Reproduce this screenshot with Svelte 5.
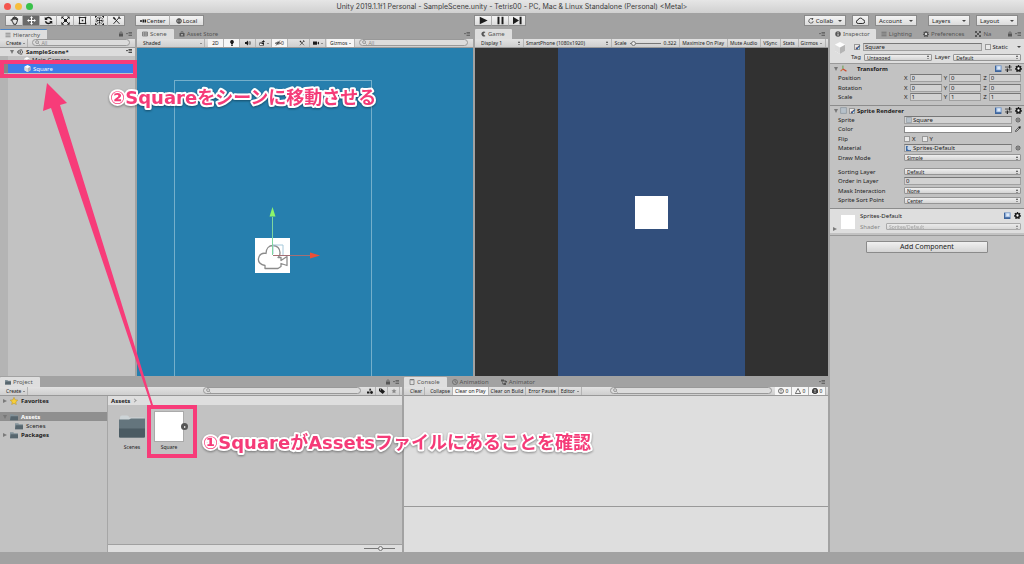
<script>
	const tools = ["hand", "move", "rotate", "scale", "rect", "transform", "custom"];
	let tool = $state("move");
	let clearOnPlay = $state(true);

	const transform = [
		{ name: "Position", v: ["0", "0", "0"] },
		{ name: "Rotation", v: ["0", "0", "0"] },
		{ name: "Scale", v: ["1", "1", "1"] }
	];
	const axes = ["X", "Y", "Z"];
</script>

<!-- all small icons share a 12x12 box -->
{#snippet icon(name)}
	<svg class="icon" viewBox="0 0 12 12" aria-hidden="true">
		{#if name == "hand"}
			<path class="line" d="M3.5 7.5 1 5.5l1-.9 1.6 1.1V2.5l1.1-.3.5 2.6V1.3l1.2-.2.3 3.6.7-3 1.1.2-.2 3.4 1.2-2 .9.5-1.1 4.3L8 11H4.8z" />
		{:else if name == "move"}
			<path d="M6 0 8 2.6H6.7v2.7h2.7V4L12 6 9.4 8V6.7H6.7v2.7H8L6 12 4 9.4h1.3V6.7H2.6V8L0 6l2.6-2v1.3h2.7V2.6H4z" />
		{:else if name == "rotate"}
			<path class="bold" d="M10 5A4.2 4.2 0 0 0 2.5 3.8M2 7a4.2 4.2 0 0 0 7.5 1.2" />
			<path d="M1 1v4.4h4zM11 11V6.6H7z" />
		{:else if name == "scale"}
			<path class="line" d="m2 2 8 8M10 2l-8 8" />
			<path d="M4 4h4v4H4zM.5.5h3.7L.5 4.2zM11.5.5v3.7L7.8.5zM.5 11.5V7.8l3.7 3.7zM11.5 11.5H7.8l3.7-3.7z" />
		{:else if name == "rect"}
			<path class="line" d="M2 2h8v8H2z" />
			<path d="M1 1h2v2H1zM9 1h2v2H9zM1 9h2v2H1zM9 9h2v2H9zM5 5h2v2H5z" />
		{:else if name == "transform"}
			<circle class="dash" cx="6" cy="6" r="4.6" />
			<path d="M6 2 7.5 4h-1v1.5H8v-1L10 6 8 7.5v-1H6.5V8h1L6 10 4.5 8h1V6.5H4v1L2 6l2-1.5v1h1.5V4h-1zM0 0h3L0 3zM12 0v3L9 0zM0 12V9l3 3zM12 12H9l3-3z" />
		{:else if name == "custom"}
			<path class="line" d="m3 3 7 7.5M2 10.5 9.5 2" />
			<path d="M1 2.5 2.5 1 5 3.5 3.500 5zM8 1l1 2 2 1 .8-1.500-1 .3-.8-.9.5-1.200z" />
		{:else if name == "pivot"}
			<path d="M0 4.5h4v3H0zM5 3h3v6H5zM9 3h3v6H9z" />
		{:else if name == "globe"}
			<circle class="line" cx="6" cy="6" r="4.8" />
			<path class="line" d="M1 6h10M6 1v10M2.5 3.3h7M2.5 8.7h7" />
		{:else if name == "play"}
			<path d="M1 1v10l10.5-5z" />
		{:else if name == "pause"}
			<path d="M2 1h2.6v10H2zM7.4 1H10v10H7.4z" />
		{:else if name == "step"}
			<path d="M0 1v10l8-5zM8.8 1h2.6v10H8.8z" />
		{:else if name == "sync"}
			<path class="line" d="M8.5 2A4.5 4.5 0 1 0 10.5 6" /><path d="m7 0 4 1-2.5 3z" />
		{:else if name == "cloud"}
			<path class="line" d="M3 10a2.3 2.3 0 0 1-.3-4.6 3.4 3.4 0 0 1 6.5-.4A2.5 2.5 0 0 1 9 10z" />
		{:else if name == "list"}
			<path class="line" d="M1 2.5h10M1 6h10M1 9.5h10" />
		{:else if name == "hash"}
			<path class="line" d="M1 2h10v8H1zM1 6h10M4.5 2v8M8 2v8" />
		{:else if name == "bag"}
			<path d="M1 4h10v7H1z" /><path class="line" d="M4 5V1.5h4V5" /><path class="white" d="M5 6h2v3H5z" />
		{:else if name == "pac"}
			<path d="M11 2A5 5 0 1 0 11 10L6.5 6z" />
		{:else if name == "info"}
			<circle cx="6" cy="6" r="5.5" /><path class="white" d="M5.2 2.4h1.7V4H5.2zM5.2 5h1.7v4.5H5.2z" />
		{:else if name == "gear"}
			<path d="M5 0h2l.4 1.7 1 .4L10 1.200 11.2 3l-1 1.3.4 1L12 6l-.3 2-1.6.3-.5 1 .7 1.5L8.5 12 7 11H5l-1.5 1-1.8-1.2.7-1.5-.5-1L.3 8 0 6l1.4-.7.4-1L.8 3 2 1.200l1.6.9 1-.4z" />
			<circle class="white" cx="6" cy="6" r="2" />
		{:else if name == "nav"}
			<path class="bold" d="m2 2 8 8M10 2l-8 8" /><path d="M0 0h4v4H0zM8 0h4v4H8zM0 8h4v4H0zM8 8h4v4H8z" />
		{:else if name == "lock"}
			<path d="M2 5h8v6H2z" /><path class="line" d="M4 5V2h4v3" />
		{:else if name == "menu"}
			<path d="M0 4h4L2 7zM5 2h7v1.5H5zM5 5h7v1.5H5zM5 8h7v1.5H5z" />
		{:else if name == "unity"}
			<path class="line" d="M9 1 2.5 3.500 1 6l1.500 2.500L9 11M11 3.500V8.500M6.500 6H1.500M6.500 6 9.500 1.500M6.500 6l3 4.500" />
		{:else if name == "cube"}
			<path fill="#fdfdfd" d="m6 0 5 2.5v6.5L6 12 1 9V2.5z" /><path fill="#b5b5b5" d="M6 5.5 11 2.8V9l-5 3z" /><path fill="#dcdcdc" d="M6 5.5 1 2.8V9l5 3z" />
		{:else if name == "bulb"}
			<path d="M6 0a3.8 3.8 0 0 0-2 7v2h4V7a3.8 3.8 0 0 0-2-7zM4.5 10h3v2h-3z" />
		{:else if name == "sound"}
			<path d="M0 4h2.5L6 1v10L2.5 8H0z" /><path class="line" d="M7.5 3.5q1.5 2.5 0 5M9.5 2q2.5 4 0 8" />
		{:else if name == "fx"}
			<path d="M1 5h9v6H1z" /><path d="m5 3 3-1V0l4 3-4 2z" /><path class="white" d="M2 8l2-2 2 3 1.5-1L9 10H2z" />
		{:else if name == "eye"}
			<path class="line" d="M.5 6.5Q6 1 11.5 6.5 6 10.5.5 6.5zM2 11l8-10" /><circle cx="6" cy="6" r="1.5" />
		{:else if name == "camera"}
			<path d="M0 3h8v6.5H0zM8.5 6 12 3v6.5z" />
		{:else if name == "folder"}
			<path fill="#83929a" d="M0 2h5l1 1.5h6V11H0z" /><path fill="#57666e" d="M1 5h11v6H0z" />
		{:else if name == "star"}
			<path fill="#f7cf3a" stroke="#a98414" stroke-width=".6" d="m6 .5 1.7 3.7 4 .5-3 2.7.8 4L6 9.4l-3.5 2 .8-4-3-2.7 4-.5z" />
		{:else if name == "console"}
			<path class="line" d="M2 .8h8v10.4H2z" /><path d="M3 1h6v1.5H3z" />
		{:else if name == "clock"}
			<circle class="line" cx="6" cy="6" r="5" /><path class="line" d="M6 2.5V6l3 1.5" />
		{:else if name == "animator"}
			<path d="M0 1h6v4H0zM7 4h5v3H7zM5 8h5v4H5z" /><path class="line" d="M3 5v5h3M6 3h3v2" />
		{:else if name == "shapes"}
			<path d="m6 0 3 5H4zM0 7h5v4H0z" /><circle cx="9" cy="9" r="2.8" />
		{:else if name == "tag"}
			<path d="M0 1h5l7 6-4.5 5L0 6z" /><circle class="white" cx="3" cy="3.5" r="1" />
		{:else if name == "fav"}
			<path d="m6 1 1.5 3.3 3.5.4-2.6 2.4.7 3.5L6 8.9l-3.1 1.7.7-3.5L1 4.7l3.5-.4z" />
		{:else if name == "log"}
			<circle class="line" cx="6" cy="6" r="5" /><path d="M5.4 2.5h1.2v4.5H5.4zM5.4 8h1.2v1.3H5.4z" />
		{:else if name == "warn"}
			<path class="line" d="M6 1 11.3 11H.7z" />
		{:else if name == "error"}
			<path fill="#444" d="M3.5 0h5L12 3.5v5L8.5 12h-5L0 8.5v-5z" /><path class="white" d="M5.2 2.5h1.6v4.5H5.2zM5.2 8h1.6v1.5H5.2z" />
		{:else if name == "book"}
			<path fill="#3d649c" d="M0 1h11v11H0z" /><path fill="#9ebbe2" d="M2 1h9v8H2z" /><path fill="#dfeaf7" d="M4 2.5h5v5H4z" />
		{:else if name == "preset"}
			<path class="line" d="M0 3.5h7M5 8.5h7M0 8.5h3" /><path d="M7 0h2v6H7zM3 6h2v6H3zM9 3h3v1H9z" />
		{:else if name == "axes"}
			<path stroke="#5a9c3a" stroke-width="1.5" d="M5 7V1" /><path stroke="#c94b32" stroke-width="2" d="m5 7 6 3.5" /><path stroke="#d06a3a" stroke-width="2" d="M5 7 1 10.5" />
		{:else if name == "sprite"}
			<path fill="#b6c0c9" stroke="#7f8b95" d="M1 1h10v10H1z" />
		{:else if name == "ball"}
			<path fill="#3d69a3" d="M0 2h10v10H0z" /><circle cx="7" cy="6" r="4.5" fill="#c8d8ea" />
		{:else if name == "pick"}
			<circle class="line" cx="6" cy="6" r="4" /><circle cx="6" cy="6" r="1.3" />
		{:else if name == "dropper"}
			<path class="line" d="m1 11 .5-2.5 5-5 2 2-5 5z" /><path d="m6 2 1-1 1 .8L9.8 0 12 2.200 10.200 4l.8 1-1 1z" />
		{/if}
	</svg>
{/snippet}

{#snippet search(label, hint)}
	<label class="search">
		<svg viewBox="0 0 12 12" aria-hidden="true"><circle cx="5" cy="5" r="3.5" /><path d="m8 8 3 3" /></svg>
		<input type="search" aria-label={label} placeholder={hint} />
	</label>
{/snippet}

{#snippet drop(value, label)}
	<span class="drop"><select aria-label={label}><option>{value}</option></select></span>
{/snippet}

{#snippet compIcons()}
	<span class="right comp-icons">{@render icon("book")}{@render icon("preset")}{@render icon("gear")}</span>
{/snippet}

<div class="window">
	<header class="title">
		<span class="lights"><i class="red"></i><i class="yellow"></i><i class="green"></i></span>
		<h1>Unity 2019.1.1f1 Personal - SampleScene.unity - Tetris00 - PC, Mac &amp; Linux Standalone (Personal) &lt;Metal&gt;</h1>
	</header>

	<nav class="toolbar">
		<div class="left-tools">
			<div class="group tools">
				{#each tools as t}
					<button class:active={tool == t} aria-label={t} onclick={() => (tool = t)}>{@render icon(t)}</button>
				{/each}
			</div>
			<div class="group pivots">
				<button>{@render icon("pivot")}Center</button>
				<button>{@render icon("globe")}Local</button>
			</div>
		</div>
		<div class="group tools">
			<button aria-label="Play">{@render icon("play")}</button>
			<button aria-label="Pause">{@render icon("pause")}</button>
			<button aria-label="Step">{@render icon("step")}</button>
		</div>
		<div class="right-tools">
			<button class="pop">{@render icon("sync")}Collab<b class="caret"></b></button>
			<button class="small" aria-label="Services">{@render icon("cloud")}</button>
			<button class="pop">Account<b class="caret"></b></button>
			<button class="pop gap">Layers<b class="caret"></b></button>
			<button class="pop">Layout<b class="caret"></b></button>
		</div>
	</nav>

	<div class="work">
		<div class="docks">
			<div class="upper">
				<section class="panel hierarchy">
					<div class="tabs">
						<button class="tab on focus">{@render icon("list")}Hierarchy</button>
						<span class="right">{@render icon("lock")}{@render icon("menu")}</span>
					</div>
					<div class="bar">
						<button>Create<b class="caret"></b></button>
						{@render search("Search hierarchy", "All")}
					</div>
					<ul class="scene-tree">
						<li class="scene-name"><b class="fold open"></b>{@render icon("unity")}<strong>SampleScene*</strong><span class="right">{@render icon("menu")}</span></li>
						<li>{@render icon("cube")}Main Camera</li>
						<li class="selected">{@render icon("cube")}Square</li>
					</ul>
				</section>

				<section class="panel scene">
					<div class="tabs">
						<button class="tab on">{@render icon("hash")}Scene</button>
						<button class="tab">{@render icon("bag")}Asset Store</button>
						<span class="right">{@render icon("menu")}</span>
					</div>
					<div class="bar">
						<button class="shaded">Shaded<b class="caret right"></b></button>
						<div class="toggles">
							<button class="lit">2D</button>
							<button class="lit" aria-label="Lighting">{@render icon("bulb")}</button>
							<button aria-label="Audio">{@render icon("sound")}</button>
							<button aria-label="Effects">{@render icon("fx")}<b class="caret"></b></button>
							<button class="lit">{@render icon("eye")}0</button>
						</div>
						<div class="toggles">
							<button aria-label="Tools">{@render icon("custom")}</button>
							<button aria-label="Camera">{@render icon("camera")}<b class="caret"></b></button>
						</div>
						<button class="lit">Gizmos<b class="caret"></b></button>
						{@render search("Search scene", "All")}
					</div>
					<svg class="scene-view" viewBox="0 0 336 328" preserveAspectRatio="xMidYMid slice" role="img" aria-label="Scene view">
						<rect class="frame" x="37.5" y="32.5" width="197" height="360" />
						<rect x="118" y="190" width="35" height="35" fill="#fff" />
						<path class="cam" d="M128 217.5c-5-1-7-4-6.5-7 .5-4 4-6 7.5-5 0-5 3-8 7-8s7 3 7 7c0 2-.5 4-2 5h3v3l6-4v9l-6-2v3l-3 2h-13z" />
						<path class="guide" d="M136 206v-9h10v10" />
						<path stroke="#7fd6a0" d="M135.5 207v-38" />
						<path fill="#8df56a" d="m135.5 159 3 9.5h-6z" />
						<path stroke="#a46f75" d="M136 207.5h38" />
						<path fill="#ee4f35" d="m183 207.5-10 3v-6z" />
					</svg>
				</section>

				<section class="panel game">
					<div class="tabs">
						<button class="tab on">{@render icon("pac")}Game</button>
						<span class="right">{@render icon("menu")}</span>
					</div>
					<div class="bar">
						<span class="drop display"><select aria-label="Display"><option>Display 1</option></select></span>
						<span class="drop aspect"><select aria-label="Aspect"><option>SmartPhone (1080x1920)</option></select></span>
						<label class="zoom">Scale<input type="range" min="0" max="100" value="5" /><span>0.322</span></label>
						<button>Maximize On Play</button>
						<button>Mute Audio</button>
						<button>VSync</button>
						<button>Stats</button>
						<button>Gizmos<b class="caret"></b></button>
					</div>
					<div class="game-view">
						<div class="phone"><div class="sprite"></div></div>
					</div>
				</section>
			</div>

			<div class="lower">
				<section class="panel project">
					<div class="tabs">
						<button class="tab on">{@render icon("folder")}Project</button>
						<span class="right">{@render icon("lock")}{@render icon("menu")}</span>
					</div>
					<div class="bar">
						<button>Create<b class="caret"></b></button>
						{@render search("Search project", "")}
						<button aria-label="By type">{@render icon("shapes")}</button>
						<button aria-label="By label">{@render icon("tag")}</button>
						<button class="faded" aria-label="Save search">{@render icon("fav")}</button>
					</div>
					<div class="browser">
						<ul class="tree">
							<li><b class="fold"></b>{@render icon("star")}<strong>Favorites</strong></li>
							<li class="current"><b class="fold open"></b>{@render icon("folder")}<strong>Assets</strong></li>
							<li class="child">{@render icon("folder")}Scenes</li>
							<li><b class="fold"></b>{@render icon("folder")}<strong>Packages</strong></li>
						</ul>
						<div class="assets">
							<div class="crumbs"><strong>Assets</strong><i></i></div>
							<div class="grid">
								<figure>
									<svg viewBox="0 0 28 28" aria-hidden="true">
										<path fill="#cdd4d7" d="M2 5q0-2 2-2h5q2 0 2 2h14q2 0 2 2v4H2z" />
										<path fill="#64757d" d="M1 7h10l2-1h14v18q0 1-1 1H2q-1 0-1-1z" />
										<path fill="#4b5b63" d="M1 16h26v8q0 1-1 1H2q-1 0-1-1z" />
									</svg>
									<figcaption>Scenes</figcaption>
								</figure>
								<figure>
									<div class="thumb"><button class="expand" aria-label="Expand Square"></button></div>
									<figcaption>Square</figcaption>
								</figure>
							</div>
							<div class="size"><input type="range" aria-label="Icon size" min="0" max="100" value="52" /></div>
						</div>
					</div>
				</section>

				<section class="panel console">
					<div class="tabs">
						<button class="tab on">{@render icon("console")}Console</button>
						<button class="tab">{@render icon("clock")}Animation</button>
						<button class="tab">{@render icon("animator")}Animator</button>
						<span class="right">{@render icon("menu")}</span>
					</div>
					<div class="bar">
						<button>Clear</button>
						<button class="apart">Collapse</button>
						<button class:lit={clearOnPlay} onclick={() => (clearOnPlay = !clearOnPlay)}>Clear on Play</button>
						<button>Clear on Build</button>
						<button>Error Pause</button>
						<button>Editor<b class="caret"></b></button>
						{@render search("Search console", "")}
						<button class="lit count">{@render icon("log")}0</button>
						<button class="lit count">{@render icon("warn")}0</button>
						<button class="lit count">{@render icon("error")}0</button>
					</div>
					<div class="messages"></div>
					<div class="detail"></div>
				</section>
			</div>
		</div>

		<aside class="panel inspector">
			<div class="tabs">
				<button class="tab on">{@render icon("info")}Inspector</button>
				<button class="tab">{@render icon("list")}Lighting</button>
				<button class="tab">{@render icon("gear")}Preferences</button>
				<button class="tab">{@render icon("nav")}Na</button>
				<span class="right">{@render icon("lock")}{@render icon("menu")}</span>
			</div>

			<div class="object">
				<span class="big-cube">{@render icon("cube")}</span>
				<div class="object-rows">
					<div class="object-row">
						<input type="checkbox" checked aria-label="Active" />
						<input class="field" type="text" aria-label="Name" value="Square" />
						<label class="tick"><input type="checkbox" />Static</label>
						<b class="caret"></b>
					</div>
					<div class="object-row tags">
						<span>Tag</span>{@render drop("Untagged", "Tag")}
						<span>Layer</span>{@render drop("Default", "Layer")}
					</div>
				</div>
			</div>

			<div class="component">
				<h2><b class="fold open"></b>{@render icon("axes")}<span class="name wide">Transform</span>{@render compIcons()}</h2>
				<div class="rows even">
					{#each transform as row}
						<div class="row">
							<span>{row.name}</span>
							<div class="vector">
								{#each row.v as v, i}
									<label>{axes[i]}<input class="field" type="text" value={v} /></label>
								{/each}
							</div>
						</div>
					{/each}
				</div>
			</div>

			<div class="component">
				<h2><b class="fold open"></b>{@render icon("sprite")}<input type="checkbox" checked aria-label="Sprite Renderer enabled" /><span class="name">Sprite Renderer</span>{@render compIcons()}</h2>
				<div class="rows">
					<div class="row"><span>Sprite</span><div class="value"><button class="field object-field">{@render icon("sprite")}Square</button>{@render icon("pick")}</div></div>
					<div class="row"><span>Color</span><div class="value"><button class="swatch" aria-label="Color"></button>{@render icon("dropper")}</div></div>
					<div class="row"><span>Flip</span><div class="value"><label class="tick"><input type="checkbox" />X</label><label class="tick"><input type="checkbox" />Y</label></div></div>
					<div class="row"><span>Material</span><div class="value"><button class="field object-field">{@render icon("ball")}Sprites-Default</button>{@render icon("pick")}</div></div>
					<div class="row"><span>Draw Mode</span>{@render drop("Simple", "Draw Mode")}</div>
				</div>
				<div class="rows later">
					<div class="row"><span>Sorting Layer</span>{@render drop("Default", "Sorting Layer")}</div>
					<div class="row"><label for="order">Order in Layer</label><input id="order" class="field" type="text" value="0" /></div>
					<div class="row"><span>Mask Interaction</span>{@render drop("None", "Mask Interaction")}</div>
					<div class="row"><span>Sprite Sort Point</span>{@render drop("Center", "Sprite Sort Point")}</div>
				</div>
			</div>

			<div class="material">
				<b class="fold"></b>
				<div class="preview"></div>
				<div class="material-body">
					<div class="material-name">Sprites-Default<span class="right comp-icons">{@render icon("book")}{@render icon("gear")}</span></div>
					<div class="shader"><span>Shader</span>{@render drop("Sprites/Default", "Shader")}</div>
				</div>
			</div>

			<div class="add"><button>Add Component</button></div>
		</aside>
	</div>

	<footer></footer>

	<!-- tutorial notes over the editor -->
	<svg class="notes" width="1024" height="564" viewBox="0 0 1024 564">
		<path class="pink" d="M47 83 67 103 60 105 153 405 151 405 51 108 43 111z" />
		<rect class="box" x="2" y="62" width="133" height="14" />
		<rect class="box" x="149" y="407" width="46" height="49" />
		<text x="110" y="104">②Squareをシーンに移動させる</text>
		<text x="203" y="449">①SquareがAssetsファイルにあることを確認</text>
	</svg>
</div>

<style>
	:global(body) {
		background: #a2a2a2;
		font-family: "Noto Sans", "Open Sans", sans-serif;
	}
	.window {
		position: relative;
		display: flex;
		flex-direction: column;
		min-height: 100vh;
		overflow: hidden;
		background: #a2a2a2;
		color: #1c1c1c;
		font-size: 6px;
		line-height: 8px;
	}
	button,
	input,
	select {
		box-sizing: border-box;
		margin: 0;
		padding: 0;
		border: 0;
		border-radius: 0;
		background: none;
		color: inherit;
		font: inherit;
		min-width: 0;
		outline: none;
	}
	button {
		display: flex;
		align-items: center;
		justify-content: center;
		white-space: nowrap;
	}
	ul,
	h1,
	h2,
	figure {
		margin: 0;
		padding: 0;
		list-style: none;
		font-size: inherit;
	}
	.right {
		margin-left: auto;
	}

	/* icons */
	.icon {
		flex: none;
		width: 6px;
		height: 6px;
		fill: currentColor;
	}
	.line,
	.bold,
	.dash {
		fill: none;
		stroke: currentColor;
		stroke-width: 1.2;
	}
	.bold {
		stroke-width: 2;
	}
	.dash {
		stroke-dasharray: 2 1;
	}
	.white {
		fill: #fff;
	}
	.caret {
		flex: none;
		margin-left: 3px;
		border: 2px solid transparent;
		border-top-color: #444;
		border-bottom: 0;
	}
	.fold {
		flex: none;
		width: 0;
		border: 2px solid transparent;
		border-left: 4px solid #7b7b7b;
		border-right: 0;
	}
	.fold.open {
		border: 2px solid transparent;
		border-top: 4px solid #777;
		border-bottom: 0;
	}

	/* title */
	.title {
		display: flex;
		align-items: center;
		height: 13px;
		background: linear-gradient(#e6e6e6, #d0d0d0);
	}
	.lights {
		position: absolute;
		left: 4px;
		display: flex;
		gap: 4px;
	}
	.lights i {
		width: 7px;
		height: 7px;
		border-radius: 50%;
	}
	.red {
		background: #f4564f;
	}
	.yellow {
		background: #f6bd3c;
	}
	.green {
		background: #38c149;
	}
	h1 {
		flex: 1;
		text-align: center;
		font: 400 7px/13px Inter, sans-serif;
		color: #3c3c3c;
	}

	/* main toolbar */
	.toolbar {
		display: grid;
		grid-template-columns: 470fr auto 493fr;
		align-items: center;
		height: 15px;
		padding: 0 6px 0 5px;
	}
	.left-tools,
	.right-tools,
	.group {
		display: flex;
	}
	.left-tools {
		gap: 10px;
	}
	.toolbar button {
		height: 11px;
		border: 1px solid #8a8a8a;
		background: linear-gradient(#f4f4f4, #dcdcdc);
		gap: 1px;
	}
	.group button + button {
		border-left-color: #b0b0b0;
		margin-left: -1px;
	}
	.tools button {
		width: 18px;
	}
	.tools .icon,
	.small .icon {
		width: 9px;
		height: 9px;
	}
	.toolbar button.active {
		background: #6a6a6a;
		color: #fff;
	}
	.pivots button {
		width: 35px;
	}
	.right-tools {
		justify-content: flex-end;
		gap: 6px;
	}
	.toolbar .pop {
		width: 42px;
		padding: 0 3px;
		justify-content: space-between;
	}
	.toolbar .small {
		width: 17px;
	}
	.gap {
		margin-left: 5px;
	}

	/* docks */
	.work {
		flex: 1;
		display: grid;
		grid-template-columns: 828fr 194fr;
		gap: 2px;
	}
	.docks {
		display: grid;
		grid-template-rows: 348fr 176fr;
		min-width: 0;
	}
	.upper {
		display: grid;
		grid-template-columns: 135fr 336fr 353fr;
		gap: 2px;
	}
	.lower {
		display: grid;
		grid-template-columns: 402fr 424fr;
		gap: 2px;
	}
	.panel {
		display: flex;
		flex-direction: column;
		min-width: 0;
		background: #c2c2c2;
	}
	.tabs {
		display: flex;
		align-items: flex-end;
		height: 11px;
		flex: none;
		background: #a2a2a2;
	}
	.tab {
		height: 10px;
		padding: 0 7px 0 5px;
		gap: 2px;
		color: #555;
	}
	.tab.on {
		background: #dedede;
		border-radius: 1px 1px 0 0;
	}
	.tab.focus {
		border-top: 1px solid #4a82c4;
	}
	.tabs .right {
		display: flex;
		gap: 2px;
		padding: 0 3px 2px 0;
		color: #555;
	}
	.bar {
		display: flex;
		align-items: stretch;
		flex: none;
		height: 9px;
		box-sizing: border-box;
		border-bottom: 1px solid #999;
		background: linear-gradient(#e2e2e2, #cecece);
		font-size: 5px;
		padding: 0 2px 0 4px;
	}
	.bar button {
		padding: 0 2px;
		border-right: 1px solid #b4b4b4;
	}
	.bar button.lit {
		background: #f6f6f6;
	}
	.bar .caret {
		border-width: 1px;
		border-bottom: 0;
		margin-left: 2px;
	}
	.bar .caret.right {
		margin-left: auto;
	}
	.search {
		flex: 1;
		display: flex;
		align-items: center;
		min-width: 0;
		height: 7px;
		margin: 0 3px 0 4px;
		box-sizing: border-box;
		border: 1px solid #999;
		border-radius: 4px;
		background: #dcdcdc;
	}
	.search svg {
		flex: none;
		width: 5px;
		height: 5px;
		margin: 0 1px 0 2px;
		fill: none;
		stroke: #777;
		stroke-width: 1.5;
	}
	.search input {
		flex: 1;
		height: 5px;
		line-height: 5px;
		appearance: none;
	}
	.search input::placeholder {
		color: #888;
	}

	/* hierarchy */
	.scene-tree {
		flex: 1;
		background: linear-gradient(90deg, #b4b4b4 8px, #c2c2c2 8px);
	}
	.scene-tree li {
		display: flex;
		align-items: center;
		height: 8px;
		padding-left: 24px;
		gap: 2px;
	}
	.scene-tree .scene-name {
		height: 8px;
		padding: 0 3px 0 10px;
		background: #dcdcdc;
		gap: 3px;
	}
	.scene-tree .selected {
		height: 9px;
		color: #fff;
		background: linear-gradient(90deg, #868686 8px, #3e7de8 8px);
	}
	.scene-tree .selected .icon {
		width: 7px;
		height: 7px;
	}

	/* scene and game */
	.scene-view {
		flex: 1 1 0;
		width: 100%;
		min-height: 0;
		background: #267fae;
	}
	.frame {
		fill: none;
		stroke: #74afcb;
	}
	.guide {
		fill: none;
		stroke: #a5c8da;
	}
	.cam {
		fill: #fff;
		stroke: #8b8b8b;
		stroke-width: 1.3;
		stroke-linejoin: round;
	}
	.shaded {
		width: 64px;
		margin-right: 3px;
	}
	.toggles {
		display: flex;
		margin-right: 6px;
	}
	.toggles + .toggles {
		margin-right: 1px;
	}
	.toggles button {
		min-width: 16px;
	}
	.scene .lit {
		padding: 0 3px;
	}
	.drop {
		position: relative;
		display: flex;
		min-width: 0;
	}
	.drop select {
		appearance: none;
		width: 100%;
		padding: 0 8px 0 2px;
		font-size: 5px;
		line-height: 6px;
	}
	.drop::before,
	.drop::after {
		content: "";
		position: absolute;
		right: 3px;
		top: calc(50% - 2px);
		border: 1px solid transparent;
		border-bottom: 2px solid #444;
		border-top: 0;
	}
	.drop::after {
		top: calc(50% + 1px);
		border-top: 1px solid #444;
		border-bottom: 0;
	}
	.bar .drop {
		border-right: 1px solid #b4b4b4;
	}
	.display {
		width: 44px;
	}
	.aspect {
		flex: 1;
	}
	.zoom {
		display: flex;
		align-items: center;
		gap: 3px;
		padding: 0 3px 0 2px;
		border-right: 1px solid #b4b4b4;
	}
	.game .bar button {
		padding: 0 3px 0 2px;
	}
	input[type="range"] {
		appearance: none;
		width: 31px;
		height: 6px;
	}
	input[type="range"]::-webkit-slider-runnable-track {
		height: 1px;
		background: #777;
	}
	input[type="range"]::-webkit-slider-thumb {
		appearance: none;
		box-sizing: border-box;
		width: 5px;
		height: 5px;
		margin-top: -2px;
		border: 1px solid #777;
		border-radius: 50%;
		background: #e8e8e8;
	}
	.game-view {
		flex: 1;
		display: flex;
		justify-content: center;
		background: #313131;
	}
	.phone {
		display: flex;
		align-items: center;
		justify-content: center;
		width: 53%;
		background: #324f7c;
	}
	.sprite {
		width: 33px;
		height: 33px;
		background: #fff;
	}

	/* project */
	.project .search {
		flex: none;
		width: 40%;
		margin-left: auto;
	}
	.project .search ~ button {
		width: 12px;
	}
	.faded {
		color: #888;
	}
	.browser {
		flex: 1;
		display: grid;
		grid-template-columns: 108fr 294fr;
	}
	.tree {
		border-right: 1px solid #a6a6a6;
	}
	.tree li {
		display: flex;
		align-items: center;
		gap: 3px;
		height: 9px;
		padding-left: 3px;
	}
	.tree .icon {
		width: 8px;
		height: 8px;
	}
	.tree .current {
		margin-top: 7px;
		background: #8f8f8f;
		color: #fff;
	}
	.tree .child {
		padding-left: 15px;
	}
	.assets {
		display: flex;
		flex-direction: column;
	}
	.crumbs {
		display: flex;
		align-items: center;
		gap: 3px;
		height: 9px;
		padding-left: 3px;
		background: #dedede;
	}
	.crumbs i {
		width: 3px;
		height: 3px;
		border: 1px solid #999;
		border-left: 0;
		border-bottom: 0;
		box-sizing: border-box;
		transform: rotate(45deg);
	}
	.grid {
		flex: 1;
		display: flex;
		gap: 9px;
		padding: 7px 10px;
	}
	figure {
		width: 28px;
		text-align: center;
		font-size: 5px;
	}
	figure svg,
	.thumb {
		display: block;
		width: 28px;
		height: 29px;
	}
	.thumb {
		position: relative;
		background: #fff;
		outline: 1px solid #aaa;
	}
	.expand {
		position: absolute;
		right: -5px;
		top: 11px;
		width: 7px;
		height: 7px;
		border-radius: 50%;
		background: #555;
	}
	.expand::before {
		content: "";
		border: 1px solid transparent;
		border-left: 2px solid #fff;
		border-right: 0;
	}
	figcaption {
		margin-top: 2px;
	}
	.size {
		display: flex;
		align-items: center;
		justify-content: flex-end;
		height: 7px;
		padding-right: 7px;
		border-top: 1px solid #a0a0a0;
		background: #dedede;
	}

	/* console */
	.console {
		background: #dedede;
	}
	.apart {
		margin-left: 3px;
	}
	.console .search {
		margin-left: 28px;
	}
	.count {
		width: 17px;
		gap: 2px;
	}
	.messages {
		flex: 110;
		border-bottom: 1px solid #999;
	}
	.detail {
		flex: 45;
	}

	/* inspector */
	.inspector .tab {
		padding: 0 6px 0 5px;
	}
	.object {
		display: flex;
		gap: 5px;
		padding: 3px 3px 1px 4px;
		background: #dedede;
		border-bottom: 1px solid #999;
	}
	.big-cube .icon {
		width: 12px;
		height: 12px;
	}
	.object-rows {
		flex: 1;
		display: grid;
		grid-template-rows: 10px 10px;
	}
	.object-row {
		display: flex;
		align-items: center;
		gap: 3px;
	}
	.object-row > input[type="checkbox"] {
		margin-left: 3px;
	}
	.object-row .field {
		flex: 1;
	}
	.tags .drop {
		flex: 1;
	}
	.field {
		height: 8px;
		padding: 0 1px;
		border: 1px solid #a0a0a0;
		border-top-color: #777;
		background: #d2d2d2;
		line-height: 6px;
	}
	input[type="checkbox"] {
		appearance: none;
		flex: none;
		display: grid;
		place-items: center;
		width: 6px;
		height: 6px;
		border: 1px solid #999;
		background: #e8e8e8;
	}
	input[type="checkbox"]:checked::before {
		content: "✔";
		color: #1d3f73;
		font: 7px/6px "DejaVu Sans", sans-serif;
	}
	.tick {
		display: flex;
		align-items: center;
		gap: 2px;
		margin-right: 3px;
	}
	.inspector .drop select {
		height: 7px;
		border: 1px solid #959595;
		border-radius: 1px;
		background: linear-gradient(#efefef, #d4d4d4);
	}
	.component {
		border-bottom: 1px solid #8c8c8c;
		padding-bottom: 3px;
	}
	h2 {
		display: flex;
		align-items: center;
		gap: 2px;
		height: 9px;
		padding: 0 2px 0 4px;
	}
	h2 .icon {
		width: 7px;
		height: 7px;
	}
	.wide {
		margin-left: 8px;
	}
	.comp-icons {
		display: flex;
		gap: 3px;
	}
	.comp-icons .icon {
		width: 7px;
		height: 7px;
	}
	.rows {
		display: grid;
		grid-auto-rows: 9px 10px;
		padding: 0 3px 0 8px;
	}
	.rows.even {
		grid-auto-rows: 10px 9px;
	}
	.later {
		margin-top: 5px;
	}
	.row {
		display: grid;
		grid-template-columns: 66fr 117fr;
		align-items: center;
	}
	.vector {
		display: grid;
		grid-template-columns: 1fr 1fr 1fr;
		gap: 2px;
	}
	.vector label {
		display: flex;
		gap: 2px;
	}
	.vector .field {
		flex: 1;
		width: 0;
	}
	.value {
		display: flex;
		align-items: center;
		gap: 3px;
	}
	.object-field {
		flex: 1;
		justify-content: flex-start;
		gap: 1px;
	}
	.swatch {
		flex: 1;
		height: 7px;
		border: 1px solid #888;
		background: #fff;
	}
	.material {
		display: flex;
		align-items: flex-end;
		padding: 3px 3px 2px;
		background: #dedede;
	}
	.preview {
		align-self: center;
		width: 14px;
		height: 14px;
		margin: 0 5px 0 4px;
		background: #fff;
	}
	.material-body {
		flex: 1;
		display: grid;
		grid-template-rows: 10px 9px;
	}
	.material-name {
		display: flex;
	}
	.shader {
		display: flex;
		align-items: center;
		gap: 6px;
		color: #888;
	}
	.shader .drop {
		flex: 1;
		opacity: 0.7;
	}
	.add {
		display: flex;
		justify-content: center;
		border-top: 1px solid #999;
		margin-top: 2px;
		padding-top: 5px;
	}
	.add button {
		width: 63%;
		height: 12px;
		border: 1px solid #8a8a8a;
		border-radius: 1px;
		background: linear-gradient(#f0f0f0, #d4d4d4);
		font-size: 7px;
	}

	footer {
		height: 12px;
		background: #a2a2a2;
	}

	.notes {
		position: absolute;
		left: 0;
		top: 0;
		pointer-events: none;
	}
	.pink {
		fill: #f73c79;
	}
	.box {
		fill: none;
		stroke: #f73c79;
		stroke-width: 4;
	}
	.notes text {
		font: 700 18px "DejaVu Sans", "Noto Sans CJK JP", sans-serif;
		fill: #f53b78;
		stroke: #fff;
		stroke-width: 4px;
		stroke-linejoin: round;
		paint-order: stroke;
		filter: drop-shadow(0 1px 1px #0006);
	}
</style>
